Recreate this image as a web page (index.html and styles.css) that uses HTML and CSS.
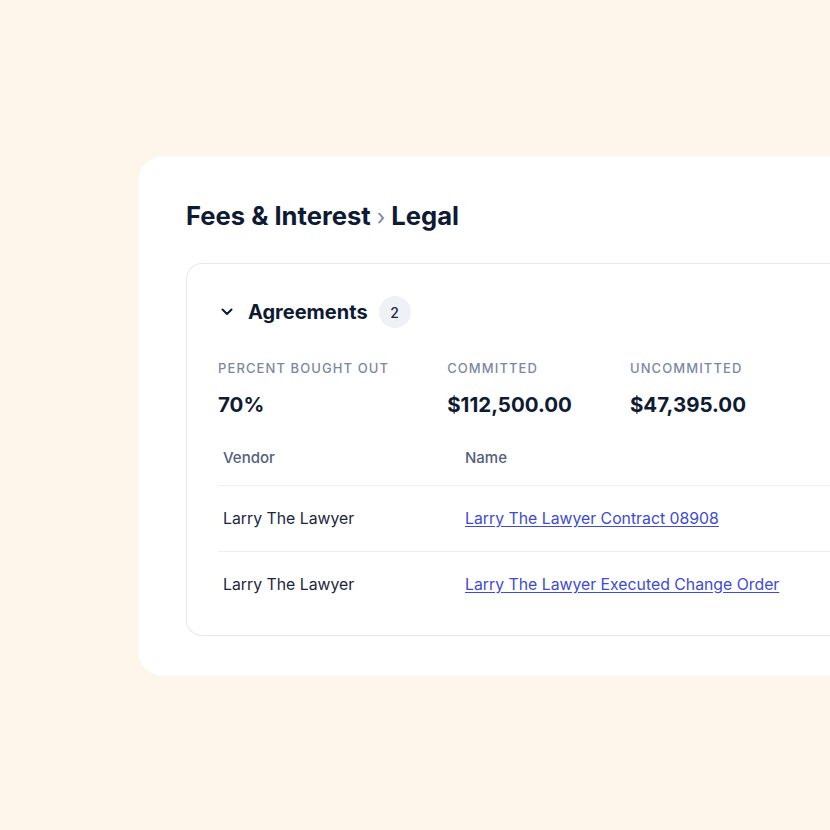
FILE: index.html
```
<!DOCTYPE html>
<html>
<head>
	<title>Fees &amp; Interest - Legal</title>
	<meta charset="utf-8">
	<link rel="stylesheet" href="styles.css">
</head>
<body>

	<div class="card">
		<h1 class="crumbs">Fees &amp; Interest <span class="sep">&rsaquo;</span> Legal</h1>

		<div class="box">
			<div class="group">
				<svg class="chevron" width="12" height="8" viewBox="0 0 12 8">
					<path d="M1.5 1.5 L6 6 L10.5 1.5" fill="none" stroke="#0f1a33" stroke-width="2" stroke-linecap="round" stroke-linejoin="round"/>
				</svg>
				<h2>Agreements</h2>
				<span class="badge">2</span>
			</div>

			<div class="stats">
				<div class="stat">
					<p class="label">Percent bought out</p>
					<p class="value">70%</p>
				</div>
				<div class="stat">
					<p class="label">Committed</p>
					<p class="value">$112,500.00</p>
				</div>
				<div class="stat">
					<p class="label">Uncommitted</p>
					<p class="value">$47,395.00</p>
				</div>
			</div>

			<table>
				<thead>
					<tr>
						<th class="vendor">Vendor</th>
						<th>Name</th>
					</tr>
				</thead>
				<tbody>
					<tr>
						<td>Larry The Lawyer</td>
						<td><a href="#">Larry The Lawyer Contract 08908</a></td>
					</tr>
					<tr>
						<td>Larry The Lawyer</td>
						<td><a href="#">Larry The Lawyer Executed Change Order</a></td>
					</tr>
				</tbody>
			</table>
		</div>
	</div>

</body>
</html>
```

FILE: styles.css
```
* {
	box-sizing: border-box;
}

body {
	margin: 0px;
	background: #fef6eb;
	font-family: Inter, "Noto Sans", sans-serif;
	color: #0f1a33;
	overflow: hidden;
}

.card {
	margin: 156px 0 0 138px;
	width: 692px;
	height: 520px;
	background: white;
	border-radius: 26px 0 0 26px;
	padding: 40px 0 0 48px;
	overflow: hidden;
}

.crumbs {
	margin: 0px;
	font-size: 25.6px;
	line-height: 40px;
	font-weight: 700;
	color: #0f1a33;
	white-space: nowrap;
}

.sep {
	color: #7b88a1;
	font-weight: 400;
	font-size: 22px;
}

.box {
	margin-top: 26px;
	width: 700px;
	border: 1px solid #e6e8ee;
	border-right: 0px;
	border-radius: 16px 0 0 16px;
	padding: 32px 0 18px 31px;
}

.group {
	display: flex;
	align-items: center;
	height: 32px;
}

.chevron {
	margin: 0 15px 0 3px;
}

h2 {
	margin: 0px;
	font-size: 20px;
	font-weight: 700;
	color: #0f1a33;
}

.badge {
	margin-left: 11px;
	width: 32px;
	height: 32px;
	border-radius: 50%;
	background: #eef1f6;
	display: flex;
	align-items: center;
	justify-content: center;
	font-size: 14px;
	font-weight: 500;
	color: #1d2640;
}

.stats {
	display: flex;
	gap: 58px;
	margin-top: 32px;
}

.stat p {
	margin: 0px;
}

.label {
	font-size: 13px;
	line-height: 16px;
	text-transform: uppercase;
	letter-spacing: 1.1px;
	color: #7b88a1;
	font-weight: 500;
	white-space: nowrap;
}

.value {
	margin-top: 15px !important;
	font-size: 20.5px;
	line-height: 28px;
	font-weight: 700;
	color: #0f1a33;
	white-space: nowrap;
}

table {
	margin-top: 8px;
	border-collapse: collapse;
	width: 640px;
}

th {
	text-align: left;
	font-size: 15px;
	font-weight: 500;
	color: #54607a;
	height: 58px;
	padding: 3px 0 0 5px;
	border-bottom: 1px solid #eceef3;
}

th.vendor {
	width: 242px;
}

td {
	font-size: 15.8px;
	color: #1d2640;
	height: 66px;
	padding: 0 0 0 5px;
	border-bottom: 1px solid #eceef3;
}

tbody tr:last-child td {
	border-bottom: 0px;
}

a {
	color: #3d4bd8;
	text-decoration: underline;
	text-underline-offset: 2px;
}
```
